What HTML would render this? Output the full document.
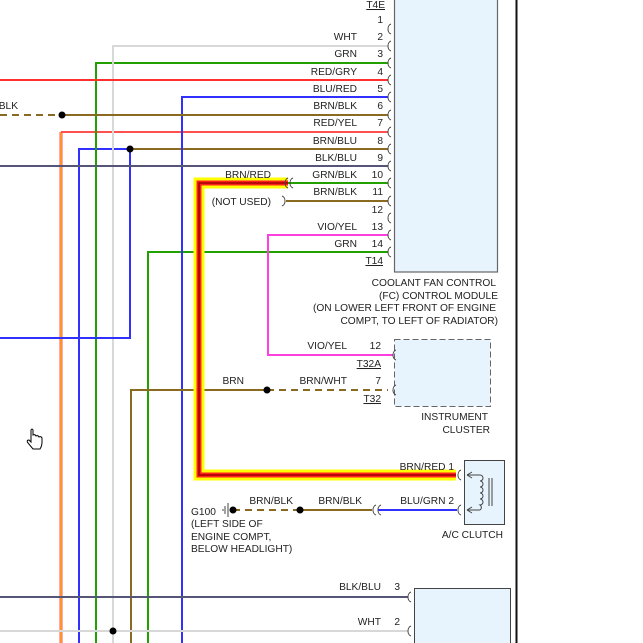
<!DOCTYPE html>
<html><head><style>
html,body{margin:0;padding:0;background:#fff;}
svg{display:block;}
text{font-family:"Liberation Sans",sans-serif;font-size:10.2px;fill:#222;}
</style></head><body>
<svg width="643" height="643" viewBox="0 0 643 643" xmlns="http://www.w3.org/2000/svg">
<rect x="394.5" y="-2" width="103" height="274" fill="#e8f4fd" stroke="#666" stroke-width="1.2"/>
<rect x="394.5" y="339.5" width="96" height="67" fill="#e8f4fd" stroke="#666" stroke-dasharray="6,3"/>
<rect x="464.5" y="460.5" width="40" height="64" fill="#e8f4fd" stroke="#444"/>
<rect x="414.5" y="588.5" width="96" height="60" fill="#e8f4fd" stroke="#444"/>
<line x1="516.5" y1="0" x2="516.5" y2="643" stroke="#111" stroke-width="2"/>

<g fill="none" stroke-width="2">
<path d="M61,132 V643" stroke="#ff5050" stroke-width="3"/><path d="M61,132 V643" stroke="#ffd400" stroke-width="1"/>
<path d="M61,132 H388" stroke="#ff5050" stroke-width="2"/>
<path d="M79,643 V149 H130" stroke="#3030ff"/>
<path d="M96,643 V63 H388" stroke="#22a000"/>
<path d="M113,643 V46 H388" stroke="#d8d8d8"/>
<path d="M130,149 V338 H0" stroke="#3030ff"/>
<path d="M130,149 H388" stroke="#8a6a20"/>
<path d="M148,643 V252 H388" stroke="#22a000"/>
<path d="M182,643 V97 H388" stroke="#3030ff"/>
<path d="M0,80 H388" stroke="#ff3030"/>
<path d="M0,115 H62" stroke="#8a6a20" stroke-dasharray="7,5"/>
<path d="M62,115 H388" stroke="#8a6a20"/>
<path d="M0,166 H388" stroke="#555577"/>
<path d="M288,183 H388" stroke="#22a000"/>
<path d="M286,201 H388" stroke="#8a6a20"/>
<path d="M388,235 H268 V355 H393" stroke="#ff40e0"/>
<path d="M131,643 V390 H267" stroke="#8a6a20"/>
<path d="M267,390 H388" stroke="#8a6a20" stroke-dasharray="7,5"/>
<path d="M288,183 H199 V475 H456" stroke="#ffff00" stroke-width="11"/>
<path d="M288,183 H199 V475 H456" stroke="#ff2020" stroke-width="5"/>
<path d="M288,183 H199 V475 H456" stroke="#a00000" stroke-width="1.5"/>
<path d="M233,510 H300" stroke="#8a6a20" stroke-dasharray="7,5"/>
<path d="M300,510 H372" stroke="#8a6a20"/>
<path d="M378,510 H457" stroke="#3030ff"/>
<path d="M0,597 H408" stroke="#555577"/>
<path d="M0,631 H408" stroke="#d8d8d8"/>
</g>
<g fill="#000">
<circle cx="62" cy="115" r="3.5"/><circle cx="130" cy="149" r="3.5"/>
<circle cx="267" cy="390" r="3.5"/><circle cx="233" cy="510" r="3.5"/>
<circle cx="300" cy="510" r="3.5"/><circle cx="113" cy="631" r="3.5"/>
</g>
<g fill="none" stroke="#444" stroke-width="1">
<path d="M391,24 a4,5 0 0 0 -3,5 a4,5 0 0 0 3,5"/>
<path d="M391,41 a4,5 0 0 0 -3,5 a4,5 0 0 0 3,5"/>
<path d="M391,58 a4,5 0 0 0 -3,5 a4,5 0 0 0 3,5"/>
<path d="M391,75 a4,5 0 0 0 -3,5 a4,5 0 0 0 3,5"/>
<path d="M391,92 a4,5 0 0 0 -3,5 a4,5 0 0 0 3,5"/>
<path d="M391,110 a4,5 0 0 0 -3,5 a4,5 0 0 0 3,5"/>
<path d="M391,127 a4,5 0 0 0 -3,5 a4,5 0 0 0 3,5"/>
<path d="M391,144 a4,5 0 0 0 -3,5 a4,5 0 0 0 3,5"/>
<path d="M391,161 a4,5 0 0 0 -3,5 a4,5 0 0 0 3,5"/>
<path d="M391,178 a4,5 0 0 0 -3,5 a4,5 0 0 0 3,5"/>
<path d="M391,196 a4,5 0 0 0 -3,5 a4,5 0 0 0 3,5"/>
<path d="M391,213 a4,5 0 0 0 -3,5 a4,5 0 0 0 3,5"/>
<path d="M391,230 a4,5 0 0 0 -3,5 a4,5 0 0 0 3,5"/>
<path d="M391,247 a4,5 0 0 0 -3,5 a4,5 0 0 0 3,5"/>
<path d="M396,350 a4,5 0 0 0 -3,5 a4,5 0 0 0 3,5"/>
<path d="M396,385 a4,5 0 0 0 -3,5 a4,5 0 0 0 3,5"/>
<path d="M461,470 a4,5 0 0 0 -3,5 a4,5 0 0 0 3,5"/>
<path d="M461,505 a4,5 0 0 0 -3,5 a4,5 0 0 0 3,5"/>
<path d="M411,592 a4,5 0 0 0 -3,5 a4,5 0 0 0 3,5"/>
<path d="M411,626 a4,5 0 0 0 -3,5 a4,5 0 0 0 3,5"/>
<path d="M288,178 a4,5 0 0 0 -3,5 a4,5 0 0 0 3,5"/><path d="M293,178 a4,5 0 0 0 -3,5 a4,5 0 0 0 3,5"/>
<path d="M282,196 a4,5 0 0 1 3,5 a4,5 0 0 1 -3,5"/>
<path d="M376,505 a4,5 0 0 0 -3,5 a4,5 0 0 0 3,5"/><path d="M381,505 a4,5 0 0 0 -3,5 a4,5 0 0 0 3,5"/>
<path d="M467,475 L480,475 M467,475 l5,-3 M467,475 l5,3"/>
<path d="M467,510 L480,510 M467,510 l5,-3 M467,510 l5,3"/>
<path d="M480,475 a3,3 0 0 1 0,6 a3,3 0 0 1 0,6 a3,3 0 0 1 0,6 a3,3 0 0 1 0,6 a3,3 0 0 1 0,6 a3,3 0 0 1 0,5 V510"/>
<path d="M489,478 V506 M492,478 V506"/>
<path d="M225,506 V514 M228,503 V517 M223,509 V511"/>
</g>
<g text-anchor="end">
<text x="385" y="8" style="text-decoration:underline">T4E</text>
<text x="383" y="23">1</text>
<text x="383" y="40">2</text><text x="357" y="40">WHT</text>
<text x="383" y="57">3</text><text x="357" y="57">GRN</text>
<text x="383" y="75">4</text><text x="357" y="75">RED/GRY</text>
<text x="383" y="92">5</text><text x="357" y="92">BLU/RED</text>
<text x="383" y="109">6</text><text x="357" y="109">BRN/BLK</text>
<text x="383" y="126">7</text><text x="357" y="126">RED/YEL</text>
<text x="383" y="144">8</text><text x="357" y="144">BRN/BLU</text>
<text x="383" y="161">9</text><text x="357" y="161">BLK/BLU</text>
<text x="383" y="178">10</text><text x="357" y="178">GRN/BLK</text>
<text x="383" y="195">11</text><text x="357" y="195">BRN/BLK</text>
<text x="383" y="213">12</text>
<text x="383" y="230">13</text><text x="357" y="230">VIO/YEL</text>
<text x="383" y="247">14</text><text x="357" y="247">GRN</text>
<text x="383" y="264" style="text-decoration:underline">T14</text>
<text x="271" y="178">BRN/RED</text>
<text x="271" y="205">(NOT USED)</text>
<text x="496" y="286">COOLANT FAN CONTROL</text>
<text x="498" y="299">(FC) CONTROL MODULE</text>
<text x="496" y="311">(ON LOWER LEFT FRONT OF ENGINE</text>
<text x="498" y="324">COMPT, TO LEFT OF RADIATOR)</text>
<text x="381" y="349">12</text><text x="347" y="349">VIO/YEL</text>
<text x="381" y="367" style="text-decoration:underline">T32A</text>
<text x="381" y="384">7</text><text x="347" y="384">BRN/WHT</text>
<text x="381" y="402" style="text-decoration:underline">T32</text>
<text x="244" y="384">BRN</text>
<text x="488" y="420">INSTRUMENT</text>
<text x="490" y="433">CLUSTER</text>
<text x="454" y="470">BRN/RED 1</text>
<text x="454" y="504">BLU/GRN 2</text>
<text x="293" y="504">BRN/BLK</text>
<text x="362" y="504">BRN/BLK</text>
<text x="503" y="538">A/C CLUTCH</text>
<text x="400" y="590">3</text><text x="381" y="590">BLK/BLU</text>
<text x="400" y="625">2</text><text x="381" y="625">WHT</text>
<text x="18" y="109">BLK</text>
</g>
<text x="191" y="515">G100</text>
<text x="191" y="527">(LEFT SIDE OF</text>
<text x="191" y="540">ENGINE COMPT,</text>
<text x="191" y="552">BELOW HEADLIGHT)</text>
<path d="M31,430 v12 l-2,-2 q-3,0 -1,3 l5,6 h7 q2,-3 2,-7 v-4 q-1,-2 -3,-1 q-1,-2 -3,-1 q-1,-2 -3,-1 v-5 q-1,-2 -2,0 z" fill="#fff" stroke="#000" stroke-width="1"/>
</svg>
</body></html>
